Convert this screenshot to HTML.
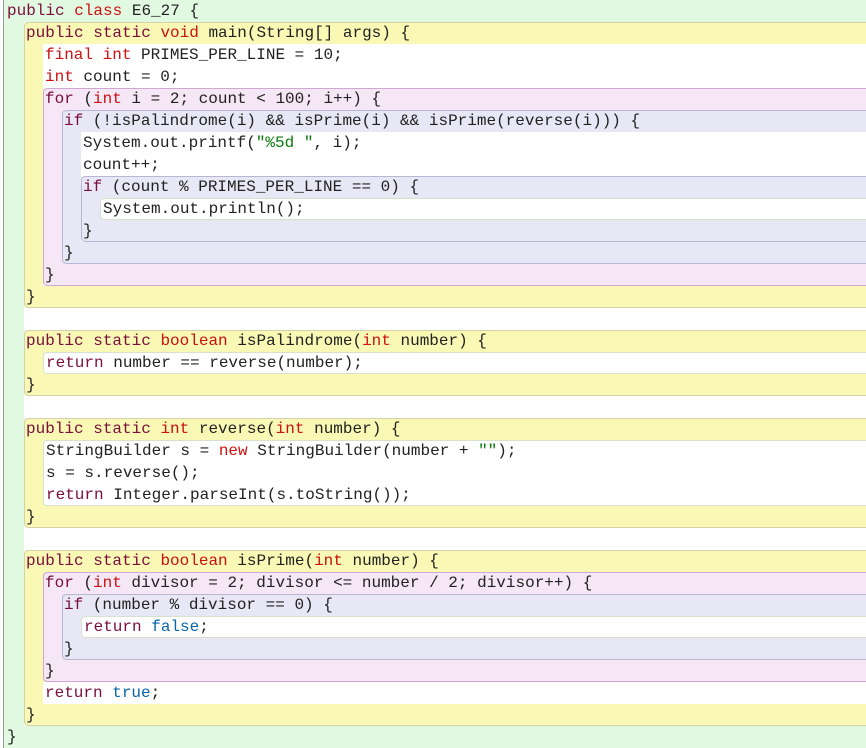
<!DOCTYPE html>
<html><head><meta charset="utf-8"><style>
*{margin:0;padding:0;box-sizing:border-box}
body{width:866px;height:748px;overflow:hidden;background:#fff;font-family:"Liberation Mono",monospace;font-size:16px;color:#222}
.l{height:22px;line-height:22px;white-space:pre}
.s{border-left:1px solid #aaa;border-radius:4px 0 0 4px}
.s>.h{border-top:1px solid #ccc;height:22px;line-height:20px;padding-left:1px;border-radius:4px 0 0 0}
.s>.c{border-bottom:1px solid #ccc;height:22px;line-height:22px;padding-left:1px;border-radius:0 0 0 4px}
.b{margin-left:18px;background:#fff;border-top:1px solid #d8e0d0;border-bottom:1px solid #d8e0d0;border-left:1px solid #d8e0d0;border-radius:4px 0 0 4px}
.b>.l{padding-left:2px}
.b>.l:first-child{height:21px;line-height:20px}
.g{background:#e1f8e1}
.y{background:#f9f8b4;border-color:#d4d2a8}
.y>.h,.y>.c{border-color:#d4d2a8}
.p{background:#f5e7f5;border-color:#cfa8cf}
.p>.h,.p>.c{border-color:#cfa8cf}
.v{background:#e8e7f5;border-color:#b8b6d0}
.v>.h,.v>.c{border-color:#b8b6d0}
.k{color:#7a0d3c}.t{color:#cc1111}.st{color:#0a7a0a}.bl{color:#0865a8}
</style></head><body>
<div style="position:absolute;left:0;top:0;width:3px;height:748px;background:#fff"></div>
<div class="s g" style="margin-left:3px;border-left:1px solid #999;height:748px;border-radius:0">
<div class="l" style="padding-left:3px;height:22px;line-height:22px"><span class="k">public</span> <span class="t">class</span> E6_27 {</div>
<div style="margin-left:20px;background:#fff">
<div class="s y"><div class="h"><span class="k">public</span> <span class="k">static</span> <span class="t">void</span> main(String[] args) {</div>
<div class="b" style="border:none;border-radius:0">
<div class="l" style="padding-left:2px;height:22px;line-height:22px"><span class="t">final</span> <span class="t">int</span> PRIMES_PER_LINE = 10;</div>
<div class="l" style="padding-left:2px"><span class="t">int</span> count = 0;</div>
<div class="s p"><div class="h"><span class="k">for</span> (<span class="t">int</span> i = 2; count &lt; 100; i++) {</div>
<div class="b" style="border:none;border-radius:0;background:transparent">
<div class="s v"><div class="h"><span class="k">if</span> (!isPalindrome(i) &amp;&amp; isPrime(i) &amp;&amp; isPrime(reverse(i))) {</div>
<div class="b" style="border:none;border-radius:0">
<div class="l" style="padding-left:2px;height:22px;line-height:22px">System.out.printf(<span class="st">"%5d "</span>, i);</div>
<div class="l" style="padding-left:2px">count++;</div>
<div class="s v"><div class="h"><span class="k">if</span> (count % PRIMES_PER_LINE == 0) {</div>
<div class="b"><div class="l" style="height:20px;line-height:20px">System.out.println();</div></div>
<div class="c">}</div></div>
</div>
<div class="c">}</div></div>
</div>
<div class="c">}</div></div>
</div>
<div class="c">}</div></div>
<div class="l"></div>
<div class="s y"><div class="h"><span class="k">public</span> <span class="k">static</span> <span class="t">boolean</span> isPalindrome(<span class="t">int</span> number) {</div>
<div class="b"><div class="l" style="height:20px;line-height:20px"><span class="k">return</span> number == reverse(number);</div></div>
<div class="c">}</div></div>
<div class="l"></div>
<div class="s y"><div class="h"><span class="k">public</span> <span class="k">static</span> <span class="t">int</span> reverse(<span class="t">int</span> number) {</div>
<div class="b">
<div class="l">StringBuilder s = <span class="t">new</span> StringBuilder(number + <span class="st">""</span>);</div>
<div class="l">s = s.reverse();</div>
<div class="l" style="height:21px"><span class="k">return</span> Integer.parseInt(s.toString());</div>
</div>
<div class="c">}</div></div>
<div class="l"></div>
<div class="s y"><div class="h"><span class="k">public</span> <span class="k">static</span> <span class="t">boolean</span> isPrime(<span class="t">int</span> number) {</div>
<div class="b" style="border:none;border-radius:0;background:transparent">
<div class="s p"><div class="h"><span class="k">for</span> (<span class="t">int</span> divisor = 2; divisor &lt;= number / 2; divisor++) {</div>
<div class="b" style="border:none;border-radius:0;background:transparent">
<div class="s v"><div class="h"><span class="k">if</span> (number % divisor == 0) {</div>
<div class="b"><div class="l" style="height:20px;line-height:20px"><span class="k">return</span> <span class="bl">false</span>;</div></div>
<div class="c">}</div></div>
</div>
<div class="c">}</div></div>
<div class="l" style="padding-left:2px;background:#fff"><span class="k">return</span> <span class="bl">true</span>;</div>
</div>
<div class="c">}</div></div>
</div>
<div class="l" style="padding-left:3px">}</div>
</div>
</body></html>
